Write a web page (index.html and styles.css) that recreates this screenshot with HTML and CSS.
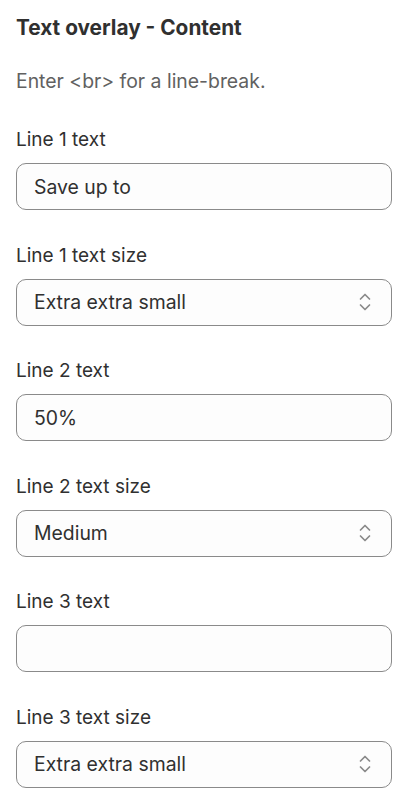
FILE: index.html
```html
<!DOCTYPE html>
<html>
<head>
<meta charset="utf-8">
<link rel="stylesheet" href="styles.css">
</head>
<body>
<div class="panel">
  <h2 class="title">Text overlay - Content</h2>
  <p class="hint">Enter &lt;br&gt; for a line-break.</p>
  <div class="fields">
    <div class="field">
      <label class="label">Line 1 text</label>
      <div class="box">Save up to</div>
    </div>
    <div class="field">
      <label class="label">Line 1 text size</label>
      <div class="box select"><span>Extra extra small</span>
        <svg class="chev" width="12" height="20" viewBox="0 0 12 20"><path d="M1.5 7 L6 2.5 L10.5 7 M1.5 13 L6 17.5 L10.5 13" fill="none" stroke="#8a8a8a" stroke-width="1.7" stroke-linecap="round" stroke-linejoin="round"/></svg>
      </div>
    </div>
    <div class="field">
      <label class="label">Line 2 text</label>
      <div class="box">50%</div>
    </div>
    <div class="field">
      <label class="label">Line 2 text size</label>
      <div class="box select"><span>Medium</span>
        <svg class="chev" width="12" height="20" viewBox="0 0 12 20"><path d="M1.5 7 L6 2.5 L10.5 7 M1.5 13 L6 17.5 L10.5 13" fill="none" stroke="#8a8a8a" stroke-width="1.7" stroke-linecap="round" stroke-linejoin="round"/></svg>
      </div>
    </div>
    <div class="field">
      <label class="label">Line 3 text</label>
      <div class="box"></div>
    </div>
    <div class="field">
      <label class="label">Line 3 text size</label>
      <div class="box select"><span>Extra extra small</span>
        <svg class="chev" width="12" height="20" viewBox="0 0 12 20"><path d="M1.5 7 L6 2.5 L10.5 7 M1.5 13 L6 17.5 L10.5 13" fill="none" stroke="#8a8a8a" stroke-width="1.7" stroke-linecap="round" stroke-linejoin="round"/></svg>
      </div>
    </div>
  </div>
</div>
</body>
</html>
```
FILE: styles.css
```css
html, body {
  margin: 0;
  padding: 0;
  background: #ffffff;
}
body {
  font-family: Inter, "Liberation Sans", sans-serif;
  color: #303030;
}
.panel {
  padding: 14px 15px 0 16px;
}
.title {
  margin: 0;
  font-size: 20.8px;
  line-height: 28px;
  font-weight: 650;
  color: #303030;
}
.hint {
  margin: 25px 0 0 0;
  font-size: 19.4px;
  line-height: 28px;
  color: #616161;
}
.fields {
  margin-top: 31px;
  display: flex;
  flex-direction: column;
  gap: 31.6px;
}
.field {
  display: flex;
  flex-direction: column;
  gap: 9px;
}
.label {
  font-size: 19px;
  line-height: 28px;
  color: #303030;
}
.box {
  box-sizing: border-box;
  height: 47px;
  border: 1px solid #8a8a8a;
  border-radius: 10px;
  background: #fdfdfd;
  padding: 0 17px;
  display: flex;
  align-items: center;
  font-size: 19.4px;
  color: #303030;
}
.select {
  justify-content: space-between;
  padding-right: 20px;
}
.chev {
  flex: none;
}
```
